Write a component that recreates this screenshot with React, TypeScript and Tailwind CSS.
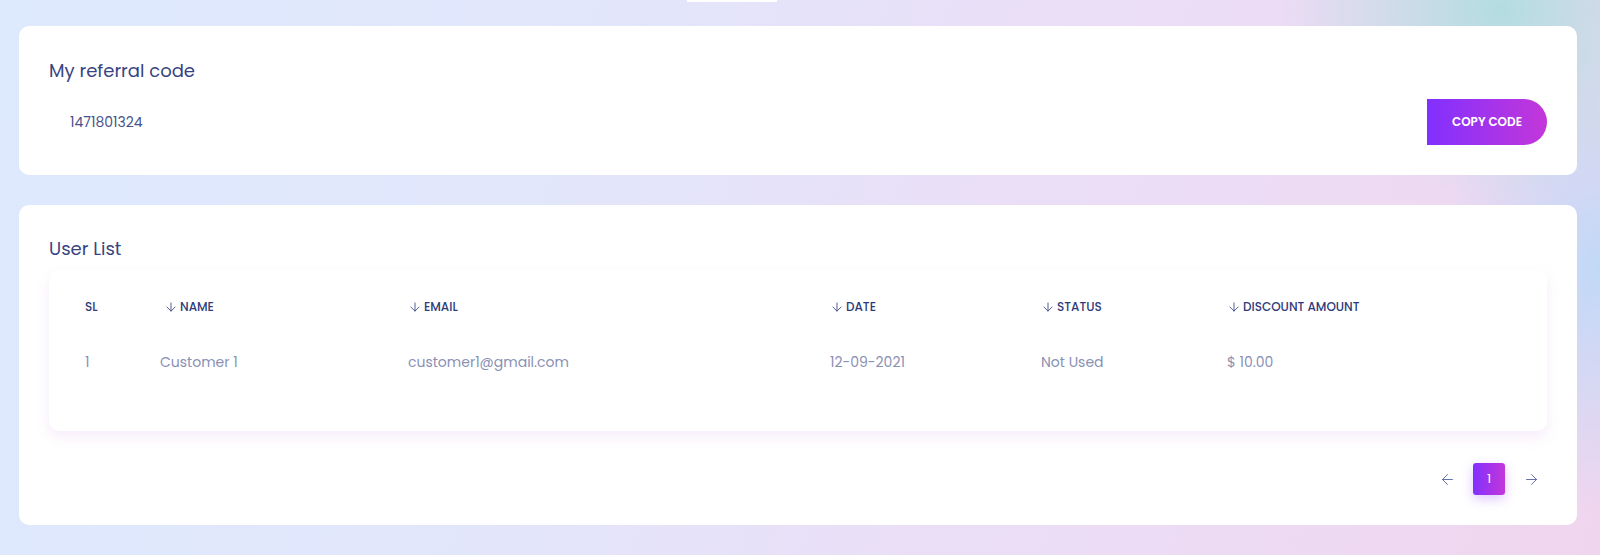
import { ArrowDown, ArrowLeft, ArrowRight } from "lucide-react";

const font = "font-['Poppins','Open_Sans','Noto_Sans',sans-serif]";

const columns = ["SL", "NAME", "EMAIL", "DATE", "STATUS", "DISCOUNT AMOUNT"];

const rows = [
  {
    sl: "1",
    name: "Customer 1",
    email: "customer1@gmail.com",
    date: "12-09-2021",
    status: "Not Used",
    amount: "$ 10.00",
  },
];

const gridCols = "grid grid-cols-[75px_248px_422px_211px_186px_1fr]";

export default function App() {
  return (
    <div
      className={`${font} relative w-[1600px] h-[555px] overflow-hidden bg-[radial-gradient(ellipse_220px_190px_at_1500px_10px,#b3dde0_0%,transparent_100%),radial-gradient(ellipse_160px_240px_at_1600px_270px,#c0d9f7_0%,transparent_100%),linear-gradient(105deg,#dde9fd_0%,#e2e6fb_35%,#eadff7_60%,#eed9f2_85%,#f0d5ee_100%)]`}
    >
      <div className="absolute left-[687px] top-0 h-[2px] w-[90px] bg-white" />

      <div className="flex flex-col gap-[30px] pl-[19px] pr-[23px] pt-[26px]">
        <section className="rounded-[10px] bg-white px-[30px] pt-[32px] pb-[30px]">
          <h2 className="text-[18px] leading-[25px] text-[#38447f]">My referral code</h2>
          <div className="mt-[16px] flex items-center justify-between">
            <span className="pl-[21px] text-[14px] text-[#47528a]">1471801324</span>
            <button className="h-[46px] w-[120px] rounded-r-[23px] bg-[linear-gradient(90deg,#8230fe,#c337d9)] text-[12px] font-semibold text-white">
              COPY CODE
            </button>
          </div>
        </section>

        <section className="rounded-[10px] bg-white px-[30px] pt-[31px] pb-[30px]">
          <h2 className="text-[18px] leading-[25px] text-[#38447f]">User List</h2>
          <div className="mt-[9px] h-[161px] rounded-[10px] bg-white pl-[36px] shadow-[0_6px_14px_rgba(230,200,240,0.35)]">
            <div className={`${gridCols} pt-[28px] text-[12px] font-medium text-[#2f3b7a]`}>
              {columns.map((c, i) => (
                <div key={c} className={`flex items-center gap-[2px] ${i === 1 ? "pl-[4px]" : ""}`}>
                  {i > 0 && <ArrowDown size={14} strokeWidth={1.4} />}
                  <span>{c}</span>
                </div>
              ))}
            </div>
            {rows.map((r) => (
              <div key={r.sl} className={`${gridCols} mt-[36px] text-[14px] text-[#8990b4]`}>
                <div>{r.sl}</div>
                <div>{r.name}</div>
                <div>{r.email}</div>
                <div>{r.date}</div>
                <div>{r.status}</div>
                <div>{r.amount}</div>
              </div>
            ))}
          </div>
          <div className="mt-[32px] flex items-center justify-end gap-[16px] pr-[6px]">
            <button className="flex h-[32px] w-[20px] items-center justify-center text-[#4a5a9c]">
              <ArrowLeft size={17} strokeWidth={1.2} />
            </button>
            <button className="h-[32px] w-[32px] rounded-[3px] bg-[linear-gradient(90deg,#8230fe,#c337d9)] text-[13px] text-white shadow-[0_4px_12px_rgba(140,60,250,0.28)]">
              1
            </button>
            <button className="flex h-[32px] w-[20px] items-center justify-center text-[#4a5a9c]">
              <ArrowRight size={17} strokeWidth={1.2} />
            </button>
          </div>
        </section>
      </div>
    </div>
  );
}
